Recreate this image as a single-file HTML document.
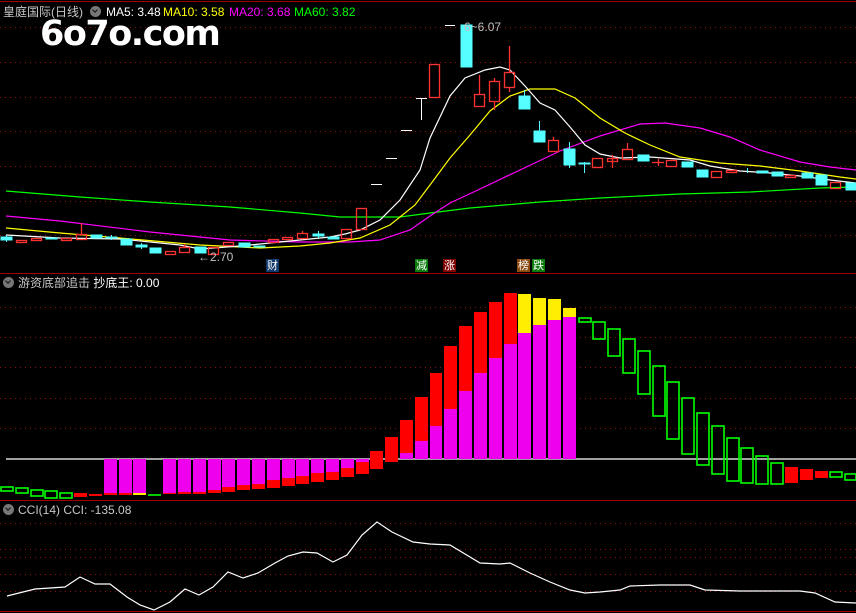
<!DOCTYPE html>
<html><head><meta charset="utf-8"><style>
html,body{margin:0;padding:0;background:#000;}
body{width:856px;height:613px;overflow:hidden;position:relative;font-family:"Liberation Sans","Noto Sans CJK SC",sans-serif;}
.t{position:absolute;font-size:12px;white-space:nowrap;line-height:14px;}
.ic{display:inline-block;width:11px;height:11px;border-radius:50%;background:#777;vertical-align:-1px;position:relative}
.ic:after{content:"";position:absolute;left:3px;top:2px;width:3px;height:3px;border-right:1.5px solid #111;border-bottom:1.5px solid #111;transform:rotate(45deg)}
.tag{position:absolute;font-size:11px;color:#fff;width:13px;height:13px;line-height:13px;text-align:center;font-family:"Noto Sans CJK SC",sans-serif}
</style></head><body>
<svg width="856" height="613" style="position:absolute;left:0;top:0" xmlns="http://www.w3.org/2000/svg">
<g stroke="#a00000" stroke-width="1">
<line x1="0" y1="1.5" x2="856" y2="1.5"/>
<line x1="0" y1="273.5" x2="856" y2="273.5"/>
<line x1="0" y1="500.5" x2="856" y2="500.5"/>
<line x1="0" y1="611.5" x2="856" y2="611.5"/>
</g>
<g stroke="#8b1010" stroke-width="1" stroke-dasharray="1,4">
<line x1="0" y1="27.5" x2="856" y2="27.5"/><line x1="0" y1="62.5" x2="856" y2="62.5"/>
<line x1="0" y1="97.5" x2="856" y2="97.5"/><line x1="0" y1="131.5" x2="856" y2="131.5"/>
<line x1="0" y1="166.5" x2="856" y2="166.5"/><line x1="0" y1="201.5" x2="856" y2="201.5"/>
<line x1="0" y1="235.5" x2="856" y2="235.5"/>
<line x1="0" y1="307.5" x2="856" y2="307.5"/><line x1="0" y1="337.5" x2="856" y2="337.5"/>
<line x1="0" y1="367.5" x2="856" y2="367.5"/><line x1="0" y1="398.5" x2="856" y2="398.5"/>
<line x1="0" y1="428.5" x2="856" y2="428.5"/>
<line x1="0" y1="523.5" x2="856" y2="523.5"/><line x1="0" y1="549.5" x2="856" y2="549.5"/>
<line x1="0" y1="557.5" x2="856" y2="557.5"/><line x1="0" y1="574.5" x2="856" y2="574.5"/>
<line x1="0" y1="591.5" x2="856" y2="591.5"/>
</g>
<g fill="none" stroke-width="1.2">
<polyline stroke="#00ff00" points="6,191 80,197 150,202 230,207 300,213 340,217 400,217 430,213 470,208 540,202 600,198 680,194 750,192 820,188 856,187"/>
<polyline stroke="#ff00ff" points="6,216 60,221 150,232 230,240 300,242 350,242 380,240 410,230 430,216 450,203 480,189 520,170 560,151 600,136 640,124 665,123 700,128 730,137 760,150 800,162 830,167 856,170"/>
<polyline stroke="#ffff00" points="6,228 60,233 120,238 200,245 260,248 300,246 330,243 360,238 390,225 415,205 430,185 450,158 470,135 490,111 510,96 530,89 555,89 575,98 600,118 625,133 650,145 680,157 720,163 760,166 800,171 840,177 856,179"/>
<polyline stroke="#ffffff" points="6,235 60,238 120,239 180,245 200,249 240,246 290,241 330,237 345,234 360,230 380,220 400,200 420,170 430,138 450,96 465,78 485,70 500,67 510,70 525,86 540,103 555,110 570,127 585,145 600,154 620,158 650,157 690,160 710,166 740,171 770,173 800,176 830,180 856,183"/>
</g>
<g fill="none" stroke="#ff3232" stroke-width="1.3">
<rect x="16.5" y="240.5" width="10" height="2"/>
<rect x="31.5" y="238.5" width="10" height="2"/>
<rect x="61.5" y="238.5" width="10" height="2"/>
<rect x="76.5" y="234.5" width="10" height="5"/><line x1="81.5" y1="223" x2="81.5" y2="234"/>
<rect x="165.5" y="251.5" width="10" height="3"/>
<rect x="179.5" y="247.5" width="10" height="5"/><line x1="184.5" y1="244" x2="184.5" y2="247"/>
<rect x="208.5" y="247.5" width="10" height="7"/>
<rect x="223.5" y="242.5" width="10" height="3"/>
<rect x="268.5" y="239.5" width="10" height="3"/>
<rect x="282.5" y="237.5" width="10" height="2"/>
<rect x="297.5" y="233.5" width="10" height="5"/><line x1="302.5" y1="231" x2="302.5" y2="233"/>
<rect x="341.5" y="229.5" width="10" height="9"/>
<rect x="356.5" y="208.5" width="10" height="21"/>
<rect x="429.5" y="64.5" width="10" height="33"/>
<rect x="474.5" y="94.5" width="10" height="12"/><line x1="479.5" y1="75" x2="479.5" y2="94"/>
<rect x="489.5" y="81.5" width="10" height="20"/><line x1="494.5" y1="78" x2="494.5" y2="81"/><line x1="494.5" y1="102" x2="494.5" y2="110"/>
<rect x="504.5" y="72.5" width="10" height="15"/><line x1="509.5" y1="46" x2="509.5" y2="72"/><line x1="509.5" y1="88" x2="509.5" y2="92"/>
<rect x="548.5" y="140.5" width="10" height="11"/><line x1="553.5" y1="137" x2="553.5" y2="140"/>
<rect x="592.5" y="158.5" width="10" height="9"/>
<rect x="607.5" y="158.5" width="10" height="3"/><line x1="612.5" y1="155" x2="612.5" y2="168"/>
<rect x="622.5" y="149.5" width="10" height="10"/><line x1="627.5" y1="143" x2="627.5" y2="149"/>
<line x1="652" y1="162.5" x2="664" y2="162.5"/><line x1="658.5" y1="159" x2="658.5" y2="166"/>
<rect x="666.5" y="160.5" width="10" height="6"/>
<rect x="711.5" y="171.5" width="10" height="6"/>
<rect x="726.5" y="170.5" width="10" height="2"/>
<rect x="785.5" y="175.5" width="10" height="2"/>
<rect x="830.5" y="182.5" width="10" height="6"/>
</g>
<g fill="#54ffff" stroke="#54ffff" stroke-width="1">
<rect x="1" y="237" width="11" height="3"/><line x1="6.5" y1="235" x2="6.5" y2="242"/>
<rect x="46" y="238" width="11" height="1"/>
<rect x="91" y="235" width="11" height="3"/>
<rect x="106" y="237" width="11" height="1"/><line x1="111.5" y1="235" x2="111.5" y2="240"/>
<rect x="121" y="239" width="11" height="6"/>
<rect x="136" y="245" width="11" height="2"/><line x1="141.5" y1="243" x2="141.5" y2="249"/>
<rect x="150" y="248" width="11" height="5"/>
<rect x="195" y="247" width="11" height="6"/>
<rect x="239" y="243" width="11" height="4"/>
<rect x="254" y="246" width="11" height="1"/>
<rect x="313" y="234" width="11" height="2"/><line x1="318.5" y1="231" x2="318.5" y2="238"/>
<rect x="328" y="237" width="11" height="2"/>
<rect x="461" y="25" width="11" height="42"/>
<rect x="519" y="96" width="11" height="13"/><line x1="524.5" y1="90" x2="524.5" y2="96"/>
<rect x="534" y="131" width="11" height="11"/><line x1="539.5" y1="121" x2="539.5" y2="131"/>
<rect x="564" y="149" width="11" height="16"/><line x1="569.5" y1="142" x2="569.5" y2="168"/>
<rect x="579" y="163" width="11" height="1"/><line x1="584.5" y1="162" x2="584.5" y2="173"/>
<rect x="638" y="155" width="11" height="6"/>
<rect x="682" y="162" width="11" height="5"/>
<rect x="697" y="170" width="11" height="7"/>
<line x1="747.5" y1="168" x2="747.5" y2="173"/>
<rect x="757" y="171" width="11" height="2"/>
<rect x="772" y="172" width="11" height="4"/>
<rect x="802" y="173" width="11" height="5"/>
<rect x="816" y="175" width="11" height="10"/>
<rect x="846" y="183" width="10" height="7"/>
</g>
<g stroke="#fff" stroke-width="1">
<line x1="371" y1="184.5" x2="382" y2="184.5"/>
<line x1="386" y1="158.5" x2="397" y2="158.5"/>
<line x1="401" y1="130.5" x2="412" y2="130.5"/>
<line x1="416" y1="98.5" x2="427" y2="98.5"/><line x1="421.5" y1="98" x2="421.5" y2="120"/>
<line x1="445" y1="25.5" x2="455" y2="25.5"/>
</g>
<line x1="6" y1="459" x2="856" y2="459" stroke="#fff" stroke-width="1.3"/>
<g fill="none" stroke="#00ff00" stroke-width="1.6">
<rect x="1" y="487" width="12" height="4"/><rect x="16" y="488" width="12" height="5"/>
<rect x="31" y="490" width="12" height="6"/><rect x="45" y="491" width="12" height="7"/>
<rect x="60" y="493" width="12" height="5"/>
<line x1="148" y1="495" x2="161" y2="495"/>
<rect x="579" y="318" width="12" height="4"/><rect x="593" y="322" width="12" height="17"/>
<rect x="608" y="329" width="12" height="27"/><rect x="623" y="339" width="12" height="34"/>
<rect x="638" y="351" width="12" height="43"/><rect x="653" y="366" width="12" height="50"/>
<rect x="667" y="382" width="12" height="57"/><rect x="682" y="398" width="12" height="56"/>
<rect x="697" y="413" width="12" height="52"/><rect x="712" y="426" width="12" height="48"/>
<rect x="727" y="438" width="12" height="43"/><rect x="741" y="448" width="12" height="35"/>
<rect x="756" y="456" width="12" height="28"/><rect x="771" y="463" width="12" height="21"/>
<rect x="830" y="472" width="12" height="5"/><rect x="845" y="474" width="11" height="6"/>
</g>
<g fill="#ff0000">
<rect x="74" y="493" width="13" height="4"/><rect x="89" y="494" width="13" height="2"/>
<rect x="104" y="459" width="13" height="36"/><rect x="119" y="459" width="13" height="36"/>
<rect x="163" y="459" width="13" height="35"/><rect x="178" y="459" width="13" height="35"/>
<rect x="193" y="459" width="13" height="35"/><rect x="208" y="459" width="13" height="34"/>
<rect x="222" y="459" width="13" height="33"/><rect x="237" y="459" width="13" height="31"/>
<rect x="252" y="459" width="13" height="30"/><rect x="267" y="459" width="13" height="29"/>
<rect x="282" y="459" width="13" height="27"/><rect x="296" y="459" width="13" height="25"/>
<rect x="311" y="459" width="13" height="23"/><rect x="326" y="459" width="13" height="21"/>
<rect x="341" y="459" width="13" height="18"/><rect x="356" y="459" width="13" height="15"/>
<rect x="370" y="451" width="13" height="18"/><rect x="385" y="437" width="13" height="25"/>
<rect x="400" y="420" width="13" height="39"/><rect x="415" y="397" width="13" height="62"/>
<rect x="430" y="373" width="12" height="86"/><rect x="444" y="346" width="13" height="113"/>
<rect x="459" y="326" width="13" height="133"/><rect x="474" y="312" width="13" height="147"/>
<rect x="489" y="302" width="13" height="157"/><rect x="504" y="293" width="13" height="166"/>
<rect x="785" y="467" width="13" height="16"/><rect x="800" y="469" width="13" height="11"/>
<rect x="815" y="471" width="13" height="7"/>
</g>
<g fill="#ffee00">
<rect x="133" y="493" width="13" height="2"/>
<rect x="518" y="294" width="13" height="165"/><rect x="533" y="298" width="13" height="161"/>
<rect x="548" y="299" width="13" height="160"/><rect x="563" y="308" width="13" height="151"/>
</g>
<g fill="#ee00ee">
<rect x="104" y="459" width="13" height="34"/><rect x="119" y="459" width="13" height="34"/>
<rect x="133" y="459" width="13" height="34"/>
<rect x="163" y="459" width="13" height="34"/><rect x="178" y="459" width="13" height="33"/>
<rect x="193" y="459" width="13" height="33"/><rect x="208" y="459" width="13" height="31"/>
<rect x="222" y="459" width="13" height="28"/><rect x="237" y="459" width="13" height="26"/>
<rect x="252" y="459" width="13" height="25"/><rect x="267" y="459" width="13" height="21"/>
<rect x="282" y="459" width="13" height="19"/><rect x="296" y="459" width="13" height="17"/>
<rect x="311" y="459" width="13" height="14"/><rect x="326" y="459" width="13" height="13"/>
<rect x="341" y="459" width="13" height="9"/><rect x="356" y="459" width="13" height="3"/>
<rect x="400" y="453" width="13" height="6"/><rect x="415" y="441" width="13" height="18"/>
<rect x="430" y="426" width="12" height="33"/><rect x="444" y="409" width="13" height="50"/>
<rect x="459" y="391" width="13" height="68"/><rect x="474" y="373" width="13" height="86"/>
<rect x="489" y="358" width="13" height="101"/><rect x="504" y="344" width="13" height="115"/>
<rect x="518" y="333" width="13" height="126"/><rect x="533" y="325" width="13" height="134"/>
<rect x="548" y="320" width="13" height="139"/><rect x="563" y="317" width="13" height="142"/>
</g>
<polyline fill="none" stroke="#fff" stroke-width="1.2" points="7,596 35,589 65,587 80,577 95,584 110,584 127,597 140,605 154,610 170,602 185,589 199,595 213,587 228,572 243,578 258,573 275,563 288,556 303,552 317,553 333,562 347,555 362,535 377,522 392,532 413,542 430,544 450,545 480,563 500,564 510,563 530,573 550,582 570,590 585,593 600,592 620,590 630,586 660,585 690,585 705,590 740,591 800,591 815,593 835,602 856,603"/>
</svg>
<div class="t" style="left:3px;top:5px;color:#c8c8c8;">皇庭国际(日线)</div>
<div class="t" style="left:90px;top:5px;"><span class="ic"></span></div>
<div class="t" style="left:106px;top:5px;color:#fff;">MA5: 3.48</div>
<div class="t" style="left:163px;top:5px;color:#ffff00;">MA10: 3.58</div>
<div class="t" style="left:229px;top:5px;color:#ff00ff;">MA20: 3.68</div>
<div class="t" style="left:294px;top:5px;color:#00ff00;">MA60: 3.82</div>
<div class="t" style="left:40px;top:15px;color:#fff;font-size:35px;line-height:38px;font-weight:bold;font-family:'DejaVu Sans',sans-serif;letter-spacing:-1.5px;">6o7o.com</div>
<div class="t" style="left:464px;top:20px;color:#c0c0c0;">6~6.07</div>
<div class="t" style="left:198px;top:250px;color:#c0c0c0;">←2.70</div>
<div class="tag" style="left:266px;top:259px;background:#10386a;">财</div>
<div class="tag" style="left:415px;top:259px;background:#0a7a0a;">减</div>
<div class="tag" style="left:443px;top:259px;background:#800000;">涨</div>
<div class="tag" style="left:517px;top:259px;background:#8a4a10;">榜</div>
<div class="tag" style="left:532px;top:259px;background:#0a7a0a;">跌</div>
<div class="t" style="left:3px;top:276px;"><span class="ic"></span></div>
<div class="t" style="left:18px;top:276px;color:#c8c8c8;">游资底部追击 <span style="color:#fff">抄底王: 0.00</span></div>
<div class="t" style="left:3px;top:503px;"><span class="ic"></span></div>
<div class="t" style="left:18px;top:503px;color:#c8c8c8;">CCI(14) CCI: -135.08</div>
</body></html>
